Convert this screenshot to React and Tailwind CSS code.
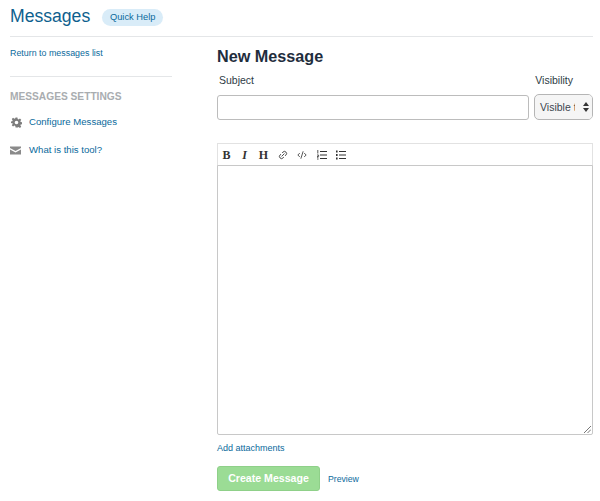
import React from 'react';
import { Link2, CodeXml } from 'lucide-react';

const linkClass = 'text-[#0b6a9c] leading-4';

const App = () => {
  return (
    <div className="w-[600px] h-[501px] overflow-hidden bg-white pl-[10px] font-['Liberation_Sans',Arial,sans-serif] text-[#2d3b45]">
      {/* Header */}
      <div className="flex items-center w-[583px] h-[37px] pb-[5px] border-b border-[#e4e6e8]">
        <h1 className="text-[17.6px] leading-6 text-[#0e5f8e]">Messages</h1>
        <a className="ml-[12px] mt-[3px] w-[61px] h-[17px] text-center rounded-full bg-[#d9ecf8] text-[#0b6a9c] text-[9.3px] leading-[17px]">
          Quick Help
        </a>
      </div>

      <div className="flex">
        {/* Sidebar */}
        <div className="w-[162px] shrink-0 pt-[8px]">
          <a className={`block text-[8.9px] ${linkClass}`}>Return to messages list</a>
          <div className="mt-[15px] border-t border-[#e4e6e8]" />
          <h3 className="mt-[14px] text-[10.2px] leading-3 font-bold text-[#a9adb0]">MESSAGES SETTINGS</h3>
          <div className="mt-[11px] flex items-center h-4">
            <svg className="w-[11px] h-[11px] ml-[1px]" viewBox="0 0 24 24">
              <path
                fill="#7d7d7d"
                fillRule="evenodd"
                d="M10 1h4l.7 3.4 1.9.8 2.9-1.9 2.8 2.8-1.9 2.9.8 1.9 3.4.7v4l-3.4.7-.8 1.9 1.9 2.9-2.8 2.8-2.9-1.9-1.9.8L14 23h-4l-.7-3.4-1.9-.8-2.9 1.9-2.8-2.8 1.9-2.9-.8-1.9L-.6 14v-4l3.4-.7.8-1.9-1.9-2.9 2.8-2.8 2.9 1.9 1.9-.8zM12 8a4 4 0 100 8 4 4 0 000-8z"
              />
            </svg>
            <a className={`ml-[7px] text-[9.6px] ${linkClass}`}>Configure Messages</a>
          </div>
          <div className="mt-3 flex items-center h-4">
            <svg className="w-[11px] h-[9px]" viewBox="0 0 22 18">
              <path fill="#8a8a8a" d="M0 1h22v3L11 10 0 4zM0 7l11 6 11-6v10H0z" />
            </svg>
            <a className={`ml-2 text-[9.6px] ${linkClass}`}>What is this tool?</a>
          </div>
        </div>

        {/* Form */}
        <div className="ml-[45px] w-[376px] shrink-0 pt-[8px]">
          <h2 className="text-[16.2px] leading-[22px] font-bold text-[#1f2d3d]">New Message</h2>
          <div className="mt-[6px] flex justify-between">
            <label className="ml-[2px] text-[10.5px] leading-[14px] text-[#2d3b45]">Subject</label>
            <label className="mr-5 text-[10.5px] leading-[14px] text-[#2d3b45]">Visibility</label>
          </div>
          <div className="mt-[8px] flex gap-[5px]">
            <div className="w-[312px] h-[25px] rounded-[3px] border border-[#bcbcbc] bg-white" />
            <div className="relative -mt-px w-[59px] h-[26px] rounded-[5px] border border-[#b5b5b5] bg-[#f5f5f5] pl-[5px] overflow-hidden text-[10.5px] leading-6 whitespace-nowrap text-[#3c4650]">
              Visible t
              <div className="absolute right-0 top-0 bottom-0 w-[17px] bg-[#f5f5f5] flex items-center justify-end pr-[3px]">
                <svg className="w-[6px] h-[10px]" viewBox="0 0 6 10">
                  <path fill="#333" d="M3 0l3 4H0zM3 10L0 6h6z" />
                </svg>
              </div>
            </div>
          </div>

          {/* Editor */}
          <div className="mt-[23px] flex items-center h-[23px] border border-[#e2e2e2] text-[#333]">
            <span className="w-[17px] text-center font-['Liberation_Serif',serif] font-bold text-[12px]">B</span>
            <span className="w-[19px] text-center font-['Liberation_Serif',serif] italic font-bold text-[12px]">I</span>
            <span className="w-[19px] text-center font-['Liberation_Serif',serif] font-bold text-[12px]">H</span>
            <span className="w-[19px] flex justify-center"><Link2 size={10} strokeWidth={2} className="-rotate-45" /></span>
            <span className="w-[20px] flex justify-center"><CodeXml size={10} strokeWidth={2} /></span>
            <span className="w-[20px] flex justify-center">
              <svg className="w-[10px] h-[10px]" viewBox="0 0 10 10">
                <path stroke="#333" strokeWidth="1.2" d="M3 1.5h7M3 5h7M3 8.5h7" />
                <path stroke="#555" strokeWidth="1" d="M0.8 0v3.5M0 5h1.6v1.5H0V8h1.6M0 10h1.6" fill="none" />
              </svg>
            </span>
            <span className="w-[18px] flex justify-center">
              <svg className="w-[10px] h-[10px]" viewBox="0 0 10 10">
                <path stroke="#333" strokeWidth="1.2" d="M3 1.5h7M3 5h7M3 8.5h7" />
                <path fill="#333" d="M0 .5h1.6v2H0zM0 4h1.6v2H0zM0 7.5h1.6v2H0z" />
              </svg>
            </span>
          </div>
          <div className="relative h-[270px] mt-[-1px] border border-[#c8c8c8] rounded-b-[2px] bg-white">
            <svg className="absolute right-[1px] bottom-[1px] w-[7px] h-[7px]" viewBox="0 0 7 7">
              <path stroke="#777" strokeWidth="1" d="M0 7L7 0M3.5 7L7 3.5" />
            </svg>
          </div>

          <a className={`block mt-[5px] text-[9px] ${linkClass}`}>Add attachments</a>
          <div className="mt-[10px] flex items-center">
            <button className="w-[103px] h-[25px] rounded-[3px] bg-[#9bdc95] border border-[#8fd089] text-white text-[10.6px] font-bold">
              Create Message
            </button>
            <a className={`ml-2 text-[8.7px] ${linkClass}`}>Preview</a>
          </div>
        </div>
      </div>
    </div>
  );
};

export default App;
